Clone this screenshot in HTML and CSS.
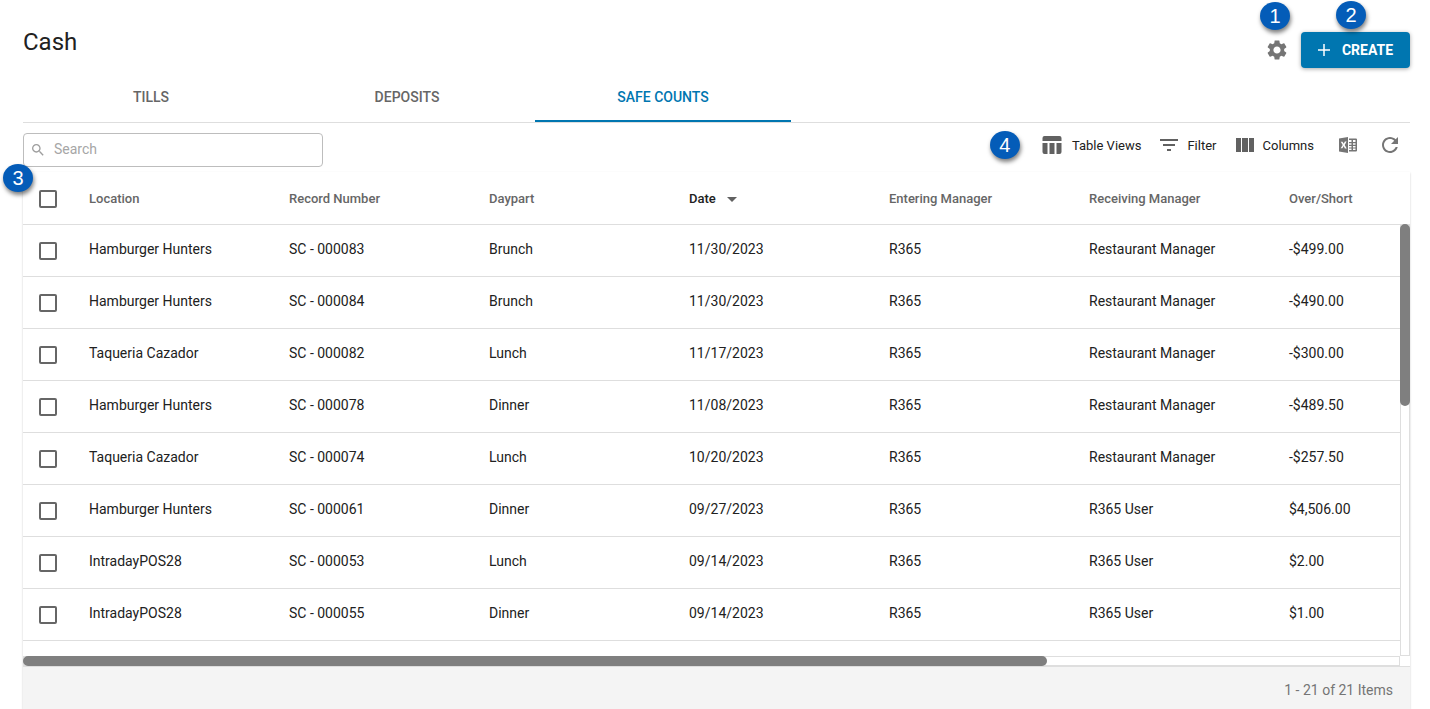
FILE: index.html
```html
<!DOCTYPE html>
<html lang="en">
<head>
<meta charset="utf-8">
<title>Cash</title>
<link rel="stylesheet" href="styles.css">
</head>
<body>
<main class="page">
  <header class="page-header">
    <h1 class="title">Cash</h1>
    <div class="header-actions">
      <div class="marked">
        <button class="icon-button" type="button" aria-label="Settings">
          <svg class="icon" viewBox="0 0 24 24"><path d="M19.14 12.94c.04-.3.06-.61.06-.94 0-.32-.02-.64-.07-.94l2.03-1.58c.18-.14.23-.41.12-.61l-1.92-3.32c-.12-.22-.37-.29-.59-.22l-2.39.96c-.5-.38-1.03-.7-1.62-.94l-.36-2.54c-.04-.24-.24-.41-.48-.41h-3.84c-.24 0-.43.17-.47.41l-.36 2.54c-.59.24-1.13.57-1.62.94l-2.39-.96c-.22-.08-.47 0-.59.22L2.74 8.87c-.12.21-.08.47.12.61l2.03 1.58c-.05.3-.09.63-.09.94s.02.64.07.94l-2.03 1.58c-.18.14-.23.41-.12.61l1.92 3.32c.12.22.37.29.59.22l2.39-.96c.5.38 1.03.7 1.62.94l.36 2.54c.05.24.24.41.48.41h3.84c.24 0 .44-.17.47-.41l.36-2.54c.59-.24 1.13-.56 1.62-.94l2.39.96c.22.08.47 0 .59-.22l1.92-3.32c.12-.22.07-.47-.12-.61l-2.01-1.58zM12 15.6c-1.98 0-3.6-1.62-3.6-3.6s1.62-3.6 3.6-3.6 3.6 1.62 3.6 3.6-1.62 3.6-3.6 3.6z"/></svg>
        </button>
        <span class="marker marker-settings">1</span>
      </div>
      <div class="marked">
        <button class="create" type="button">
          <svg class="icon-plus" viewBox="0 0 12 12"><path d="M6 0v12M0 6h12"/></svg>
          CREATE
        </button>
        <span class="marker marker-create">2</span>
      </div>
    </div>
  </header>

  <nav class="tabs">
    <a class="tab" href="#tills">TILLS</a>
    <a class="tab" href="#deposits">DEPOSITS</a>
    <a class="tab tab-active" href="#safe-counts" aria-current="page">SAFE COUNTS</a>
  </nav>

  <div class="toolbar">
    <label class="search">
      <svg class="icon-search" viewBox="0 0 24 24"><path d="M15.5 14h-.79l-.28-.27C15.41 12.59 16 11.11 16 9.5 16 5.91 13.09 3 9.5 3S3 5.91 3 9.5 5.91 16 9.5 16c1.61 0 3.09-.59 4.23-1.57l.27.28v.79l5 4.99L20.49 19l-4.99-5zm-6 0C7.01 14 5 11.99 5 9.5S7.01 5 9.5 5 14 7.01 14 9.5 11.99 14 9.5 14z"/></svg>
      <input class="search-input" type="search" placeholder="Search" aria-label="Search">
    </label>
    <div class="tools">
      <span class="marker marker-tools">4</span>
      <button class="tool tool-views" type="button">
        <svg class="icon" viewBox="0 0 24 24"><path d="M2.500 8V5a2 2 0 0 1 2-2h15a2 2 0 0 1 2 2v3zM2.500 10h5v11h-3a2 2 0 0 1-2-2zM9.500 10h5v11h-5zM16.500 10h5v9a2 2 0 0 1-2 2h-3z"/></svg>
        Table Views
      </button>
      <button class="tool" type="button">
        <svg class="icon" viewBox="0 0 24 24"><path d="M10 18h4v-2h-4v2zM3 6v2h18V6H3zm3 7h12v-2H6v2z"/></svg>
        Filter
      </button>
      <button class="tool tool-columns" type="button">
        <svg class="icon" viewBox="0 0 24 24"><path d="M3 5h5v14H3zM9 5h6v14H9zM16 5h5v14h-5z"/></svg>
        Columns
      </button>
      <button class="icon-button icon-button-export" type="button" aria-label="Export to Excel">
        <svg class="icon icon-light" viewBox="0 0 24 24"><path fill-rule="evenodd" d="M3 5.600 12 4v16l-9-1.600zM4.800 8.700 6.700 12l-2 3.300h1.700L7.700 13l1.200 2.400h1.800L8.700 12l1.900-3.400H8.900L7.700 10.800 6.500 8.700z"/><path fill-rule="evenodd" d="M13 5.500h7a1 1 0 0 1 1 1v11a1 1 0 0 1-1 1h-7zM13 7v2h2.500V7zM17 7v2h2.500V7zM13 10.200v1.500h2.500v-1.500zM17 10.200v1.500h2.500v-1.500zM13 12.900v1.500h2.500v-1.500zM17 12.900v1.500h2.500v-1.500zM13 15.500V17h2.500v-1.500zM17 15.500V17h2.500v-1.500z"/></svg>
      </button>
      <button class="icon-button" type="button" aria-label="Refresh">
        <svg class="icon icon-light" viewBox="0 0 24 24"><path d="M17.650 6.350C16.200 4.900 14.210 4 12 4c-4.420 0-7.990 3.580-7.990 8s3.570 8 7.990 8c3.730 0 6.840-2.550 7.730-6h-2.080c-.82 2.330-3.040 4-5.650 4-3.310 0-6-2.690-6-6s2.690-6 6-6c1.660 0 3.140.69 4.220 1.780L13 11h7V4l-2.350 2.350z"/></svg>
      </button>
    </div>
  </div>

  <section class="card">
    <span class="marker marker-table">3</span>
    <div class="grid-view">
      <div class="table-wrap">
        <table class="table">
          <colgroup><col class="col-check"><col class="col"><col class="col"><col class="col"><col class="col"><col class="col"><col class="col"><col></colgroup>
          <thead>
            <tr>
              <th class="check-cell"><input class="check" type="checkbox" aria-label="Select all"></th>
              <th>Location</th><th>Record Number</th><th>Daypart</th>
              <th class="sorted" aria-sort="descending">Date<svg class="sort-arrow" viewBox="0 0 10 5"><path d="M0 0h10L5 5z"/></svg></th>
              <th>Entering Manager</th><th>Receiving Manager</th><th>Over/Short</th>
            </tr>
          </thead>
          <tbody>
            <tr><td class="check-cell"><input class="check" type="checkbox" aria-label="Select SC - 000083"></td><td>Hamburger Hunters</td><td>SC - 000083</td><td>Brunch</td><td>11/30/2023</td><td>R365</td><td>Restaurant Manager</td><td>-$499.00</td></tr>
            <tr><td class="check-cell"><input class="check" type="checkbox" aria-label="Select SC - 000084"></td><td>Hamburger Hunters</td><td>SC - 000084</td><td>Brunch</td><td>11/30/2023</td><td>R365</td><td>Restaurant Manager</td><td>-$490.00</td></tr>
            <tr><td class="check-cell"><input class="check" type="checkbox" aria-label="Select SC - 000082"></td><td>Taqueria Cazador</td><td>SC - 000082</td><td>Lunch</td><td>11/17/2023</td><td>R365</td><td>Restaurant Manager</td><td>-$300.00</td></tr>
            <tr><td class="check-cell"><input class="check" type="checkbox" aria-label="Select SC - 000078"></td><td>Hamburger Hunters</td><td>SC - 000078</td><td>Dinner</td><td>11/08/2023</td><td>R365</td><td>Restaurant Manager</td><td>-$489.50</td></tr>
            <tr><td class="check-cell"><input class="check" type="checkbox" aria-label="Select SC - 000074"></td><td>Taqueria Cazador</td><td>SC - 000074</td><td>Lunch</td><td>10/20/2023</td><td>R365</td><td>Restaurant Manager</td><td>-$257.50</td></tr>
            <tr><td class="check-cell"><input class="check" type="checkbox" aria-label="Select SC - 000061"></td><td>Hamburger Hunters</td><td>SC - 000061</td><td>Dinner</td><td>09/27/2023</td><td>R365</td><td>R365 User</td><td>$4,506.00</td></tr>
            <tr><td class="check-cell"><input class="check" type="checkbox" aria-label="Select SC - 000053"></td><td>IntradayPOS28</td><td>SC - 000053</td><td>Lunch</td><td>09/14/2023</td><td>R365</td><td>R365 User</td><td>$2.00</td></tr>
            <tr><td class="check-cell"><input class="check" type="checkbox" aria-label="Select SC - 000055"></td><td>IntradayPOS28</td><td>SC - 000055</td><td>Dinner</td><td>09/14/2023</td><td>R365</td><td>R365 User</td><td>$1.00</td></tr>
          </tbody>
        </table>
      </div>
      <div class="rail">
        <div class="rail-head"></div>
        <div class="track-y"><div class="thumb-y"></div></div>
      </div>
      <div class="track-x"><div class="thumb-x"></div></div>
    </div>
    <footer class="card-footer">1 - 21 of 21 Items</footer>
  </section>
</main>
</body>
</html>
```
FILE: styles.css
```css
* {
  box-sizing: border-box;
}

body {
  margin: 0;
  background: #fff;
  color: #212121;
  font-family: Roboto, "Liberation Sans", sans-serif;
  font-size: 14px;
}

button,
input {
  font: inherit;
  color: inherit;
}

button {
  padding: 0;
  border: 0;
  background: none;
  cursor: pointer;
}

.page {
  display: flex;
  flex-direction: column;
  min-height: 100vh;
  padding: 0 20px 0 23px;
}

.page-header {
  display: flex;
  justify-content: space-between;
  align-items: flex-start;
  height: 72px;
}

.title {
  margin: 0;
  padding-top: 26px;
  font-size: 24px;
  font-weight: 400;
  line-height: 32px;
}

.header-actions {
  display: flex;
  align-items: center;
  gap: 12px;
  padding-top: 32px;
}

.marked {
  position: relative;
  display: flex;
}

.icon-button {
  display: flex;
}

.icon-button-export {
  padding: 0 2px;
}

.icon {
  flex: none;
  width: 24px;
  height: 24px;
  fill: #616161;
}

.header-actions .icon,
.icon-light {
  fill: #757575;
}

.create {
  display: flex;
  align-items: center;
  justify-content: center;
  gap: 12px;
  min-width: 109px;
  height: 36px;
  padding: 0 16px;
  border-radius: 4px;
  background: #0076b0;
  color: #fff;
  font-weight: 700;
  box-shadow: 0 1px 4px rgba(0, 0, 0, 0.35);
}

.icon-plus {
  width: 12px;
  height: 12px;
  fill: none;
  stroke: #fff;
  stroke-width: 1.500;
}

.marker {
  display: block;
  flex: none;
  width: 30px;
  height: 28px;
  border-radius: 50%;
  background: #045cb8;
  color: #fff;
  font-family: "Liberation Sans", Arial, sans-serif;
  font-size: 20px;
  line-height: 28px;
  text-align: center;
  box-shadow: 1px 3px 4px rgba(0, 0, 0, 0.5);
}

.marker-settings {
  position: absolute;
  left: -5px;
  bottom: 32px;
}

.marker-create {
  position: absolute;
  left: 35px;
  bottom: 39px;
}

.marker-tools {
  margin-right: 4px;
}

.marker-table {
  position: absolute;
  left: -20px;
  top: -8px;
}

.tabs {
  display: flex;
  height: 51px;
  border-bottom: 1px solid #dedede;
}

.tab {
  width: 256px;
  border-bottom: 2px solid transparent;
  color: #666;
  font-weight: 500;
  line-height: 50px;
  text-align: center;
  text-decoration: none;
}

.tab-active {
  border-bottom-color: #0076b0;
  color: #0076b0;
}

.toolbar {
  display: flex;
  justify-content: space-between;
  align-items: flex-start;
  height: 49px;
  padding: 10px 8px 0 0;
}

.search {
  display: flex;
  align-items: center;
  gap: 8px;
  width: 300px;
  height: 34px;
  padding: 0 6px;
  border: 1px solid #bdbdbd;
  border-radius: 4px;
}

.icon-search {
  flex: none;
  width: 16px;
  height: 16px;
  fill: #9e9e9e;
}

.search-input {
  flex: 1;
  min-width: 0;
  padding: 0 0 2px;
  border: 0;
  outline: 0;
  background: none;
  appearance: none;
}

.search-input::placeholder {
  color: #a6a6a6;
}

.tools {
  display: flex;
  align-items: center;
  gap: 16px;
  height: 24px;
}

.tool {
  display: flex;
  align-items: center;
  gap: 6px;
  font-size: 13px;
}

.tool-views {
  gap: 8px;
}

.tool-columns {
  margin-right: 4px;
}

.card {
  position: relative;
  display: flex;
  flex: 1;
  flex-direction: column;
  box-shadow: 0 1px 2px rgba(0, 0, 0, 0.2);
}

.grid-view {
  display: grid;
  flex: 1;
  grid-template-columns: minmax(0, 1fr) 10px;
  grid-template-rows: 1fr 10px;
  border-bottom: 1px solid #dedede;
}

.table-wrap {
  overflow: hidden;
}

.table {
  width: 100%;
  table-layout: fixed;
  border-spacing: 0;
}

.col-check {
  width: 50px;
}

.col {
  width: 200px;
}

.table th,
.table td {
  height: 52px;
  padding: 0 0 4px 16px;
  border-bottom: 1px solid #dedede;
  text-align: left;
  white-space: nowrap;
}

.table th {
  height: 53px;
  padding-bottom: 0;
  color: #666;
  font-size: 13px;
  font-weight: 500;
}

.table .sorted {
  color: #212121;
}

.sort-arrow {
  width: 10px;
  height: 5px;
  margin-left: 11px;
  fill: #616161;
  vertical-align: middle;
}

.table .check-cell {
  padding-bottom: 0;
}

.check {
  display: block;
  width: 18px;
  height: 18px;
  margin: 1px 0 0;
  border: 2px solid #666;
  border-radius: 2px;
  appearance: none;
}

.rail {
  display: flex;
  flex-direction: column;
}

.rail-head {
  height: 52px;
}

.track-y {
  flex: 1;
  border: 1px solid #dedede;
}

.thumb-y {
  width: 10px;
  height: 182px;
  margin: -1px;
  border-radius: 5px;
  background: #7f7f7f;
}

.track-x {
  border: 1px solid #dedede;
}

.thumb-x {
  width: 74.5%;
  height: 10px;
  margin: -1px;
  border-radius: 5px;
  background: #7f7f7f;
}

.card-footer {
  height: 42px;
  padding-right: 17px;
  background: #f4f4f4;
  color: #757575;
  line-height: 46px;
  text-align: right;
}
```
